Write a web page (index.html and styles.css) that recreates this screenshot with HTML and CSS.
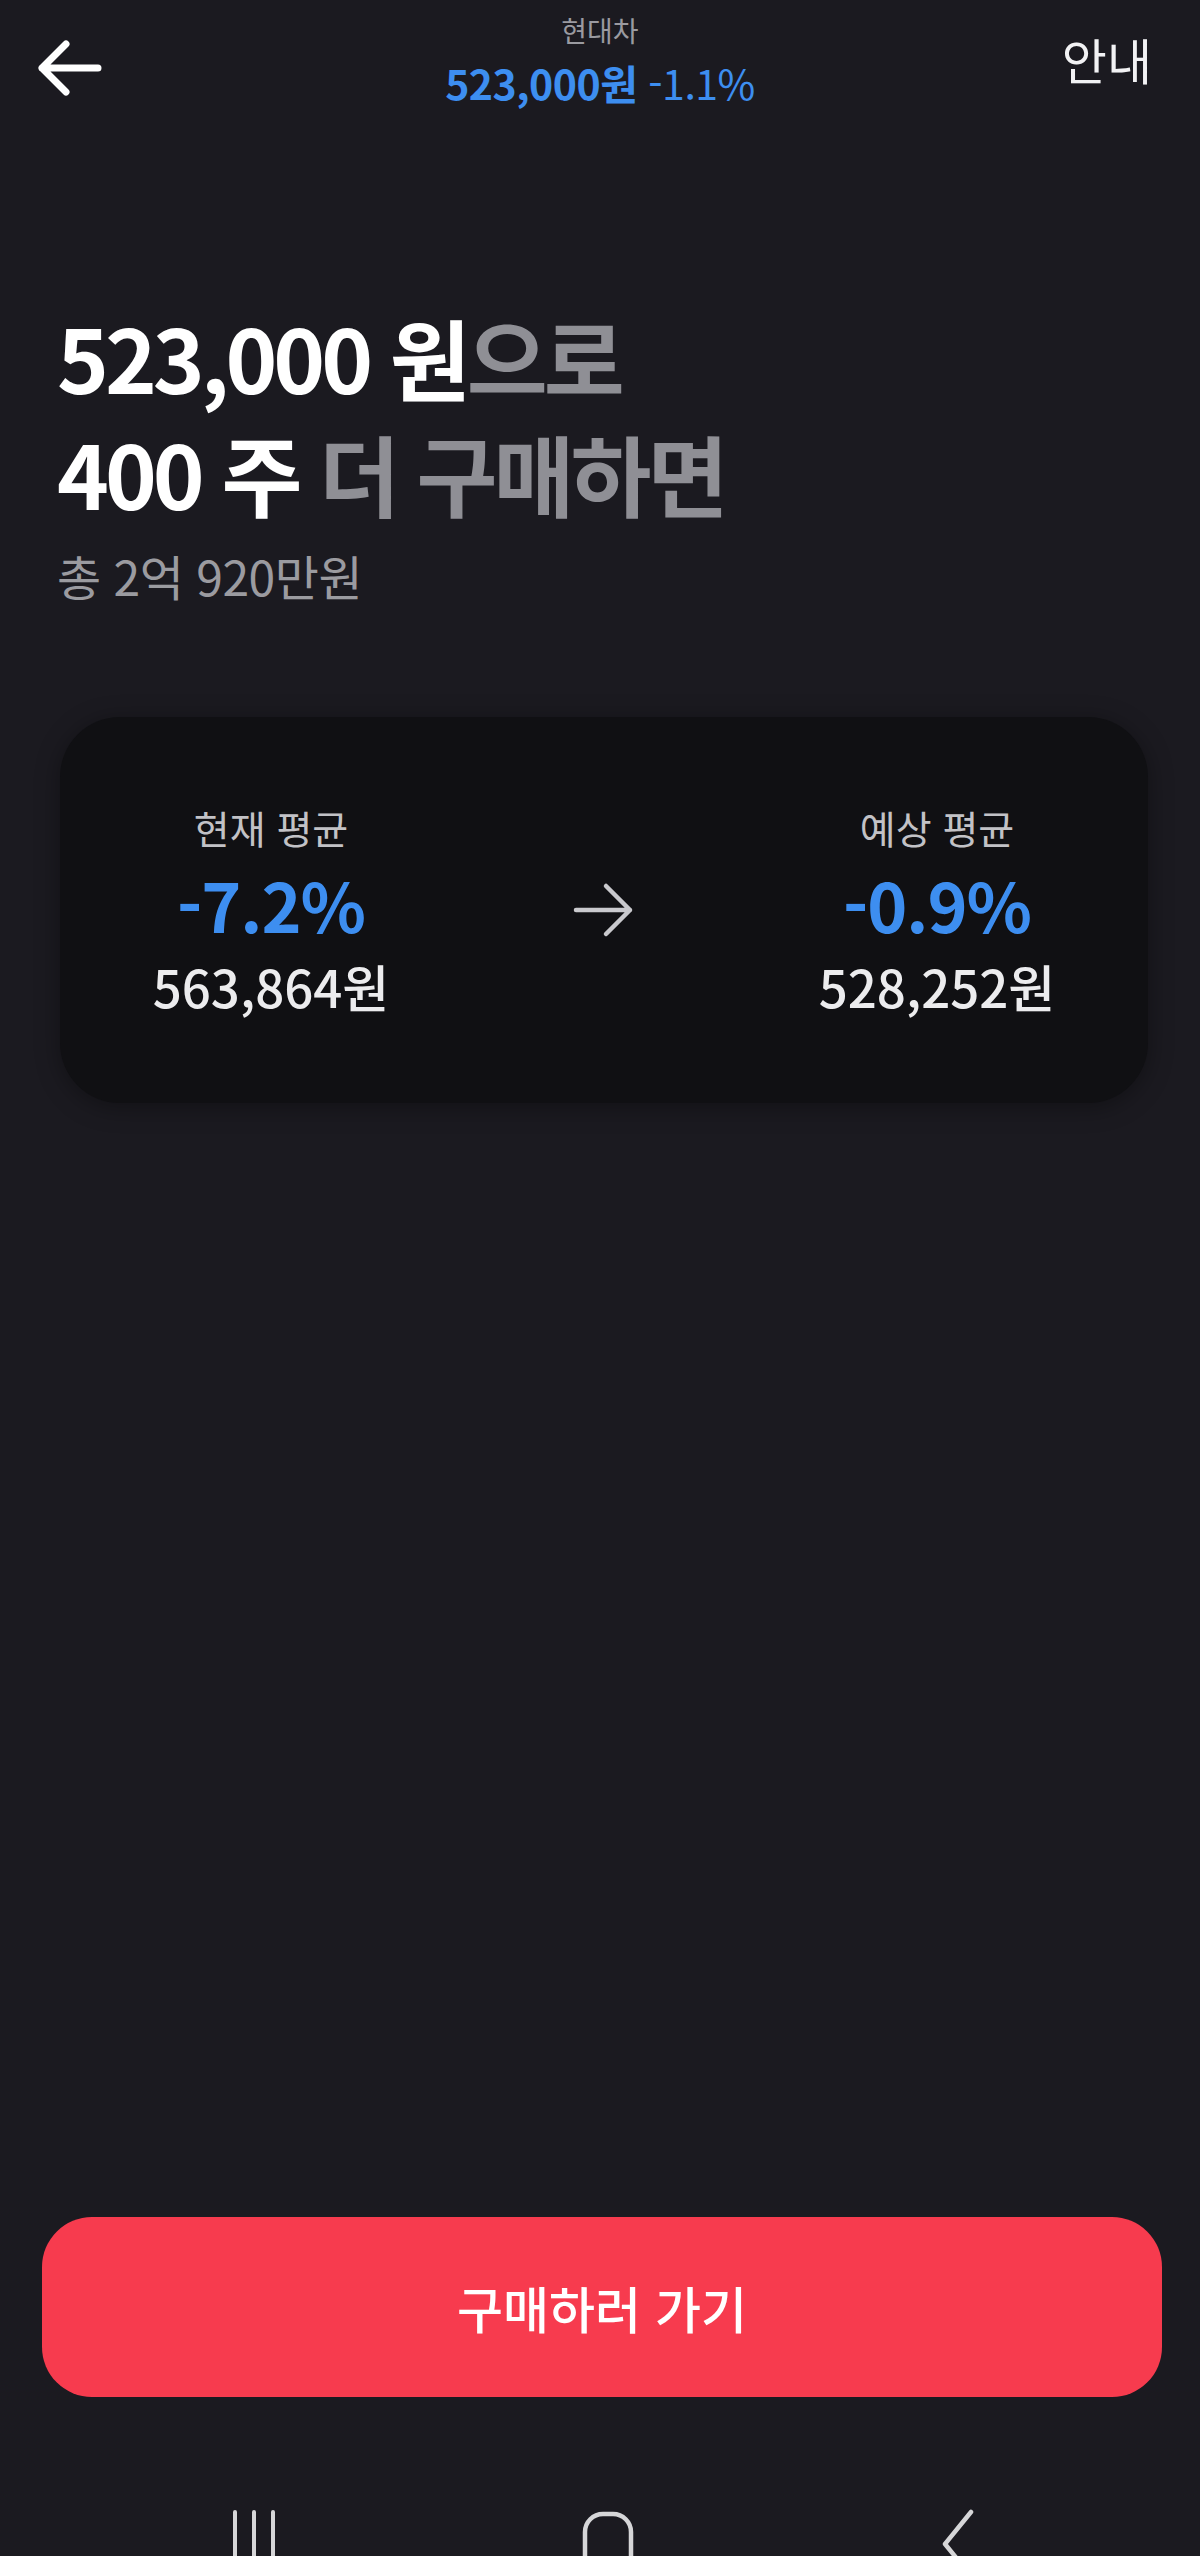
FILE: index.html
```html
<!DOCTYPE html>
<html lang="ko">
<head>
    <meta charset="UTF-8">
    <meta name="viewport" content="width=device-width, initial-scale=1.0">
    <title>구매 계산</title>
    <link rel="stylesheet" href="styles.css">
</head>
<body>
    <div class="screen">
        <header class="top-bar">
            <button class="back-button" aria-label="뒤로">
                <svg viewBox="0 0 66 56" width="66" height="56">
                    <path d="M62 28H6M30 4L6 28l24 24" fill="none" stroke="#ffffff" stroke-width="7" stroke-linecap="round" stroke-linejoin="round"/>
                </svg>
            </button>
            <div class="stock-title">
                <div class="stock-name">현대차</div>
                <div class="stock-price"><b>523,000원</b> -1.1%</div>
            </div>
            <button class="info-button">안내</button>
        </header>

        <section class="headline">
            <h1>
                <span class="strong">523,000 원</span>으로<br>
                <span class="strong">400 주</span> 더 구매하면
            </h1>
            <p class="total">총 2억 920만원</p>
        </section>

        <section class="compare-card">
            <div class="compare-col">
                <div class="compare-label">현재 평균</div>
                <div class="compare-rate">-7.2%</div>
                <div class="compare-price">563,864원</div>
            </div>
            <div class="compare-arrow">
                <svg viewBox="0 0 64 58" width="64" height="58">
                    <path d="M4 29h54M34 5l24 24-24 24" fill="none" stroke="#c9c9cd" stroke-width="4.5" stroke-linecap="round" stroke-linejoin="round"/>
                </svg>
            </div>
            <div class="compare-col">
                <div class="compare-label">예상 평균</div>
                <div class="compare-rate">-0.9%</div>
                <div class="compare-price">528,252원</div>
            </div>
        </section>

        <div class="spacer"></div>

        <button class="buy-button">구매하러 가기</button>

        <nav class="system-nav">
            <svg viewBox="0 0 50 60" width="50" height="60">
                <path d="M6 4v56M25 4v56M44 4v56" stroke="#d6d6d8" stroke-width="4" stroke-linecap="round"/>
            </svg>
            <svg viewBox="0 0 54 60" width="54" height="60">
                <rect x="4" y="6" width="46" height="60" rx="18" fill="none" stroke="#d6d6d8" stroke-width="4.5"/>
            </svg>
            <svg viewBox="0 0 40 60" width="40" height="60">
                <path d="M34 4L8 36l26 32" fill="none" stroke="#d6d6d8" stroke-width="4.5" stroke-linecap="round" stroke-linejoin="round"/>
            </svg>
        </nav>
    </div>
</body>
</html>
```

FILE: styles.css
```css
* {
    box-sizing: border-box;
}

body {
    margin: 0;
    background-color: #1b1a20;
    font-family: "Noto Sans CJK KR", "Noto Sans", sans-serif;
    color: #ffffff;
}

button {
    font-family: inherit;
    background: none;
    border: none;
    padding: 0;
    color: inherit;
    cursor: pointer;
}

.screen {
    height: 2556px;
    display: flex;
    flex-direction: column;
    overflow: hidden;
}

/* top bar */
.top-bar {
    display: grid;
    grid-template-columns: 1fr auto 1fr;
    align-items: start;
    padding: 12px 48px 0;
    height: 130px;
}

.back-button {
    justify-self: start;
    margin: 28px 0 0 -12px;
    display: flex;
}

.stock-title {
    text-align: center;
}

.stock-name {
    font-size: 28px;
    line-height: 36px;
    color: #9a9aa0;
}

.stock-price {
    margin-top: 8px;
    font-size: 41px;
    line-height: 52px;
    color: #3d8ef0;
    letter-spacing: -0.5px;
}

.stock-price b {
    font-weight: 700;
}

.info-button {
    justify-self: end;
    margin-top: 16px;
    font-size: 49px;
    line-height: 62px;
    color: #f2f2f4;
}

/* headline */
.headline {
    padding: 168px 57px 0;
}

.headline h1 {
    margin: 0;
    font-size: 88px;
    line-height: 116px;
    font-weight: 700;
    color: #8f8f95;
    letter-spacing: -4px;
}

.headline .strong {
    color: #ffffff;
}

.total {
    margin: 16px 0 0;
    font-size: 48px;
    line-height: 58px;
    color: #9b9ba0;
    letter-spacing: -0.5px;
}

/* compare card */
.compare-card {
    margin: 113px 52px 0 60px;
    height: 386px;
    background-color: #101013;
    border-radius: 60px;
    box-shadow: 0 4px 24px rgba(0, 0, 0, 0.35);
    display: flex;
    align-items: center;
    justify-content: space-between;
    padding: 0 61px;
}

.compare-col {
    width: 300px;
    text-align: center;
}

.compare-label {
    font-size: 39px;
    line-height: 48px;
    color: #c2c2c6;
}

.compare-rate {
    margin-top: 12px;
    font-size: 68px;
    line-height: 82px;
    font-weight: 700;
    color: #3d8ef0;
    letter-spacing: -1px;
}

.compare-price {
    margin-top: 10px;
    font-size: 51px;
    line-height: 62px;
    font-weight: 500;
    color: #ececee;
}

.compare-arrow {
    display: flex;
}

.spacer {
    flex: 1;
}

/* bottom */
.buy-button {
    margin: 0 38px 23px 42px;
    height: 180px;
    border-radius: 50px;
    background-color: #f73b4e;
    font-size: 50px;
    font-weight: 500;
    color: #ffffff;
    flex-shrink: 0;
}

.system-nav {
    height: 148px;
    display: flex;
    justify-content: center;
    align-items: flex-end;
    gap: 302px;
    padding-left: 6px;
    margin-bottom: -12px;
}
```
